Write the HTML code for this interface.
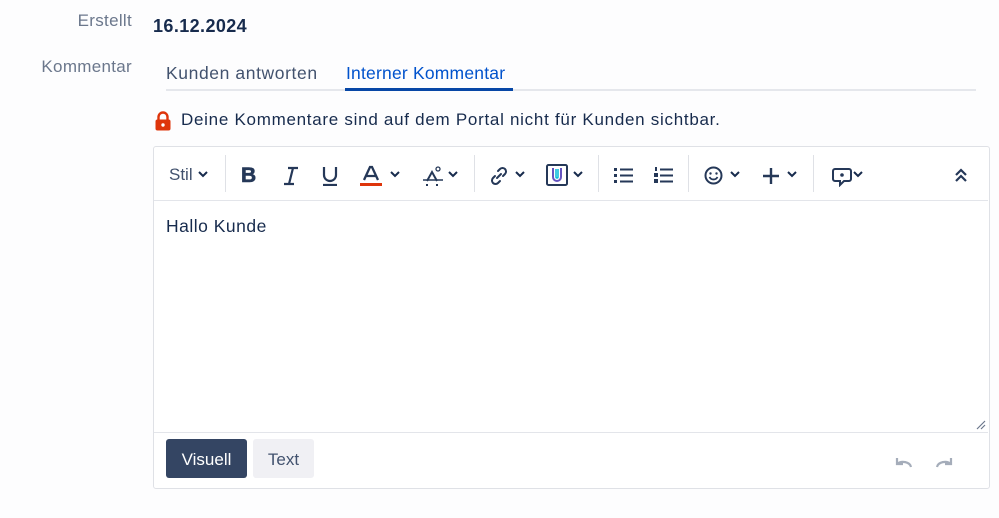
<!DOCTYPE html>
<html><head><meta charset="utf-8"><style>
body{margin:0;width:999px;height:518px;background:#fdfdfe;font-family:"Liberation Sans",sans-serif;position:relative;overflow:hidden;color:#172b4d}
.a{position:absolute;white-space:nowrap}
.lbl{color:#6b778c;font-size:17px;text-align:right;width:132px;left:0;letter-spacing:.3px}
.sep{position:absolute;top:155px;width:1px;height:37px;background:#dfe1e6}
svg{position:absolute}
.ch{width:10px;height:8px}
</style></head><body>
<div class="a lbl" style="top:11px">Erstellt</div>
<div class="a lbl" style="top:57px">Kommentar</div>
<div class="a" style="left:153px;top:16px;font-size:18px;font-weight:bold;color:#172b4d;letter-spacing:.4px">16.12.2024</div>
<div class="a" style="left:166px;top:63px;font-size:17.5px;color:#42526e;letter-spacing:.6px">Kunden antworten</div>
<div class="a" style="left:346px;top:63px;font-size:17.5px;color:#0052cc;letter-spacing:.2px">Interner Kommentar</div>
<div class="a" style="left:166px;top:89px;width:810px;height:2px;background:#e5e7ec"></div>
<div class="a" style="left:345px;top:88px;width:168px;height:3px;background:#0747a6"></div>
<svg style="left:154px;top:111px" width="18" height="20" viewBox="0 0 18 20"><path d="M4.5 9V6a4.5 4.5 0 0 1 9 0v3" fill="none" stroke="#de350b" stroke-width="2.4"/><rect x="1.5" y="8.5" width="15" height="11" rx="2" fill="#de350b"/><circle cx="9" cy="14" r="1.7" fill="#fff"/></svg>
<div class="a" style="left:181px;top:110px;font-size:17px;color:#172b4d;letter-spacing:.72px">Deine Kommentare sind auf dem Portal nicht für Kunden sichtbar.</div>
<div class="a" style="left:153px;top:146px;width:835px;height:341px;border:1px solid #dfe1e6;border-radius:3px;background:#fff"></div>
<div class="a" style="left:154px;top:200px;width:834px;height:1px;background:#e3e5ea"></div>
<div class="a" style="left:154px;top:432px;width:834px;height:1px;background:#e3e5ea"></div>
<div class="sep" style="left:225px"></div><div class="sep" style="left:474px"></div><div class="sep" style="left:598px"></div><div class="sep" style="left:688px"></div><div class="sep" style="left:813px"></div>
<div class="a" style="left:169px;top:165px;font-size:17px;color:#42526e">Stil</div>
<svg class="ch" style="left:198px;top:170px" viewBox="0 0 10 8"><path d="M1 2l4 4 4-4" fill="none" stroke="#172b4d" stroke-width="2"/></svg>
<div class="a" style="left:241px;top:164px;font-size:21px;font-weight:bold;color:#253858;-webkit-text-stroke:0.6px #253858">B</div>
<svg style="left:282px;top:166px" width="18" height="20" viewBox="0 0 18 20"><path d="M6 2h10M2 18h10M11 2L7 18" stroke="#253858" stroke-width="2.2" fill="none"/></svg>
<svg style="left:321px;top:166px" width="18" height="20" viewBox="0 0 18 20"><path d="M3 1v8a6 6 0 0 0 12 0V1M2 19h14" stroke="#253858" stroke-width="2.2" fill="none"/></svg>
<svg style="left:360px;top:165px" width="22" height="21" viewBox="0 0 22 21"><path d="M4 15L10 2h2l6 13M6 11h10" stroke="#253858" stroke-width="2.3" fill="none"/><rect x="0" y="18" width="22" height="3" fill="#de350b"/></svg>
<svg class="ch" style="left:390px;top:170px" viewBox="0 0 10 8"><path d="M1 2l4 4 4-4" fill="none" stroke="#172b4d" stroke-width="2"/></svg>
<svg style="left:422px;top:165px" width="22" height="22" viewBox="0 0 22 22"><path d="M5 16l5-9 5 9" stroke="#253858" stroke-width="2" fill="none"/><circle cx="16" cy="4" r="2" stroke="#253858" stroke-width="1.3" fill="none"/><path d="M1 15h20" stroke="#253858" stroke-width="1.5"/><path d="M5 19v2M15 19v2" stroke="#253858" stroke-width="2"/></svg>
<svg class="ch" style="left:448px;top:170px" viewBox="0 0 10 8"><path d="M1 2l4 4 4-4" fill="none" stroke="#172b4d" stroke-width="2"/></svg>
<svg style="left:489px;top:166px" width="20" height="20" viewBox="0 0 20 20"><path d="M8 12l4-4M9 5l2-2a3.5 3.5 0 0 1 5 5l-2 2M11 15l-2 2a3.5 3.5 0 0 1-5-5l2-2" stroke="#253858" stroke-width="2" fill="none" stroke-linecap="round"/></svg>
<svg class="ch" style="left:515px;top:170px" viewBox="0 0 10 8"><path d="M1 2l4 4 4-4" fill="none" stroke="#172b4d" stroke-width="2"/></svg>
<svg style="left:546px;top:164px" width="22" height="22" viewBox="0 0 22 22"><rect x="1" y="1" width="20" height="20" rx="1.5" stroke="#253858" stroke-width="2" fill="none"/><path d="M7 4v9a4 4 0 0 0 8 0V4" stroke="#6554c0" stroke-width="2" fill="none"/><path d="M10 5v8a1 1 0 0 0 2 0V5" stroke="#00b8d9" stroke-width="1.5" fill="none"/></svg>
<svg class="ch" style="left:573px;top:170px" viewBox="0 0 10 8"><path d="M1 2l4 4 4-4" fill="none" stroke="#172b4d" stroke-width="2"/></svg>
<svg style="left:614px;top:167px" width="20" height="16" viewBox="0 0 20 16"><g fill="#253858"><rect x="0" y="1" width="3" height="3"/><rect x="0" y="7" width="3" height="3"/><rect x="0" y="13" width="3" height="3"/><rect x="6" y="1.5" width="13" height="2"/><rect x="6" y="7.5" width="13" height="2"/><rect x="6" y="13.5" width="13" height="2"/></g></svg>
<svg style="left:654px;top:167px" width="20" height="17" viewBox="0 0 20 17"><g fill="#253858"><rect x="1" y="0" width="2" height="4"/><rect x="0" y="6" width="4" height="4"/><rect x="0" y="12" width="4" height="4"/><rect x="6" y="1.5" width="13" height="2"/><rect x="6" y="7.5" width="13" height="2"/><rect x="6" y="13.5" width="13" height="2"/></g></svg>
<svg style="left:704px;top:166px" width="19" height="19" viewBox="0 0 19 19"><circle cx="9.5" cy="9.5" r="8" stroke="#253858" stroke-width="2" fill="none"/><circle cx="6.5" cy="7.5" r="1.2" fill="#253858"/><circle cx="12.5" cy="7.5" r="1.2" fill="#253858"/><path d="M5.5 11a4.5 4.5 0 0 0 8 0" stroke="#253858" stroke-width="1.8" fill="none"/></svg>
<svg class="ch" style="left:730px;top:170px" viewBox="0 0 10 8"><path d="M1 2l4 4 4-4" fill="none" stroke="#172b4d" stroke-width="2"/></svg>
<svg style="left:762px;top:167px" width="18" height="18" viewBox="0 0 18 18"><path d="M9 1v16M1 9h16" stroke="#253858" stroke-width="2.4"/></svg>
<svg class="ch" style="left:787px;top:170px" viewBox="0 0 10 8"><path d="M1 2l4 4 4-4" fill="none" stroke="#172b4d" stroke-width="2"/></svg>
<svg style="left:832px;top:167px" width="20" height="20" viewBox="0 0 20 20"><path d="M3 2h14a2 2 0 0 1 2 2v8a2 2 0 0 1-2 2h-5l-4 4v-4H3a2 2 0 0 1-2-2V4a2 2 0 0 1 2-2z" stroke="#253858" stroke-width="2" fill="none"/><circle cx="10" cy="8" r="1.8" fill="#253858"/></svg>
<svg class="ch" style="left:853px;top:170px" viewBox="0 0 10 8"><path d="M1 2l4 4 4-4" fill="none" stroke="#172b4d" stroke-width="2"/></svg>
<svg style="left:955px;top:168px" width="12" height="14" viewBox="0 0 12 14"><path d="M1 7l5-5 5 5M1 13l5-5 5 5" stroke="#253858" stroke-width="2.2" fill="none"/></svg>
<div class="a" style="left:166px;top:216px;font-size:17.5px;color:#172b4d;letter-spacing:.5px">Hallo Kunde</div>
<svg style="left:975px;top:419px" width="11" height="11" viewBox="0 0 11 11"><path d="M10 2L2 10M10 6L6 10" stroke="#6b778c" stroke-width="1.2"/></svg>
<div class="a" style="left:166px;top:439px;width:81px;height:39px;background:#344563;border-radius:3px;color:#fff;font-size:17px;line-height:41px;text-align:center">Visuell</div>
<div class="a" style="left:253px;top:439px;width:61px;height:39px;background:#f0f0f4;border-radius:3px;color:#42526e;font-size:17px;line-height:41px;text-align:center">Text</div>
<svg style="left:894px;top:456px" width="20" height="12" viewBox="0 0 20 12"><path d="M3 2v6h6M3 8a8 6 0 0 1 14 3" stroke="#a5adba" stroke-width="2.2" fill="none"/></svg>
<svg style="left:934px;top:456px" width="20" height="12" viewBox="0 0 20 12"><path d="M17 2v6h-6M17 8a8 6 0 0 0-14 3" stroke="#a5adba" stroke-width="2.2" fill="none"/></svg>
</body></html>
